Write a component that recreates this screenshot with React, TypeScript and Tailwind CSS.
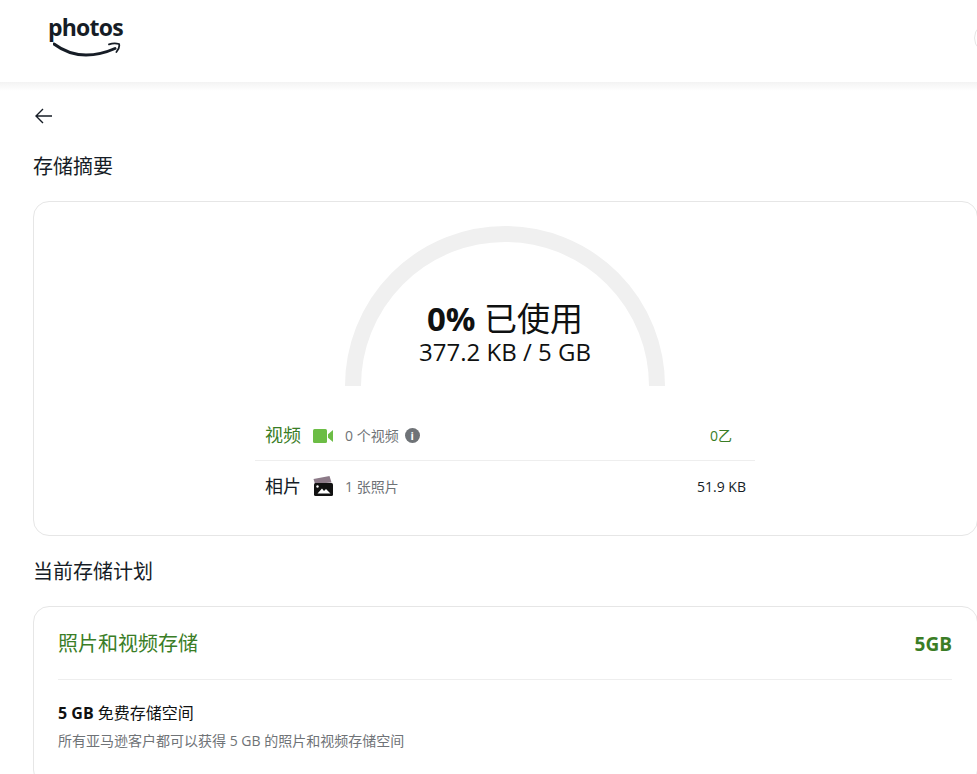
const sans = "font-['Open_Sans','Noto_Sans_CJK_SC',sans-serif]";

function Logo() {
  return (
    <div className="ml-[48px] flex w-[76px] flex-col">
      <span className="mt-[13px] text-[23px] font-bold leading-[28px] tracking-[-0.8px] text-[#161d26]">photos</span>
      <svg width="68" height="17" viewBox="0 0 68 17" className="ml-[5px] mt-[1px]" fill="none">
        <path d="M1 2C11 9.5 22 13 33 13C44 13 53 10.5 62 6.5" stroke="#161d26" strokeWidth="3" strokeLinecap="round" />
        <path d="M56 2.4C59 1.4 63 1.2 66 2C66.6 4 65.6 7.6 63.4 10" stroke="#161d26" strokeWidth="1.8" strokeLinecap="round" />
      </svg>
    </div>
  );
}

function VideoIcon() {
  return (
    <svg width="20" height="14" viewBox="0 0 20 14" className="shrink-0">
      <rect x="0" y="0" width="14" height="14" rx="1.5" fill="#6cbd45" />
      <path d="M15 5.2L20 1V13L15 8.8Z" fill="#6cbd45" />
    </svg>
  );
}

function PhotoIcon() {
  return (
    <svg width="20" height="20" viewBox="0 0 20 20" className="shrink-0">
      <path d="M0.5 3L16.5 0L18.5 6.5L2 8Z" fill="#8c7a88" />
      <rect x="1" y="7" width="19" height="13" rx="1.5" fill="#111" />
      <circle cx="4.5" cy="10.5" r="1.2" fill="#fff" />
      <path d="M4.5 17.5L9 12.5L11 15L13 13L17.5 17.5Z" fill="#fff" />
    </svg>
  );
}

function InfoIcon() {
  return (
    <span className="ml-[6px] flex size-[15px] items-center justify-center rounded-full bg-[#6f7377] text-[11px] font-bold leading-none text-white">
      i
    </span>
  );
}

function Row({ label, icon, count, value, labelClass, valueClass, info }: {
  label: string;
  icon: React.ReactNode;
  count: string;
  value: string;
  labelClass: string;
  valueClass: string;
  info?: boolean;
}) {
  return (
    <div className="flex h-[50px] items-center pl-[10px] pr-[10px]">
      <span className={`w-[48px] text-[18px] ${labelClass}`}>{label}</span>
      <span className="flex w-[32px] justify-start">{icon}</span>
      <span className="flex flex-1 items-center text-[14px] text-[#6f7377]">
        {count}
        {info && <InfoIcon />}
      </span>
      <span className={`w-[48px] whitespace-nowrap text-center text-[14px] ${valueClass}`}>{value}</span>
    </div>
  );
}

export default function App() {
  return (
    <div className={`h-[774px] w-[977px] overflow-hidden bg-white ${sans}`}>
      <header className="relative h-[82px] bg-white">
        <Logo />
        <span className="absolute left-[974px] top-[22px] size-[32px] rounded-full border border-[#e6e6e6]" />
      </header>
      <div className="h-[9px] bg-gradient-to-b from-[#f3f3f3] to-white" />
      <main className="pl-[33px]">
        <svg width="20" height="20" viewBox="0 0 20 20" className="mt-[15px] ml-[1px]" fill="none" stroke="#161d26" strokeWidth="1.4">
          <path d="M18 10H2M9 3L2 10L9 17" />
        </svg>
        <h1 className="mt-[26px] h-[29px] text-[20px] font-normal leading-[30px] text-[#161d26]">存储摘要</h1>

        <section className="mt-[20px] h-[335px] w-[945px] rounded-[16px] border border-[#e6e6e6] pr-[1px] pt-[24px]">
          <div className="relative mx-auto h-[160px] w-[320px]">
            <svg width="320" height="160" viewBox="0 0 320 160" fill="none">
              <path d="M8 160A152 152 0 0 1 312 160" stroke="#f0f0f0" strokeWidth="16" />
            </svg>
            <div className="absolute inset-x-0 top-[75px] whitespace-nowrap text-center text-[#0f1111]">
              <p className="h-[36px] text-[33px] leading-[36px]"><b className="font-bold">0%</b> 已使用</p>
              <p className="h-[30px] text-[24px] leading-[30px]">377.2 KB / 5 GB</p>
            </div>
          </div>
          <div className="mx-auto mt-[25px] w-[500px] divide-y divide-[#eeeeee]">
            <Row label="视频" icon={<VideoIcon />} count="0 个视频" value="0乙" labelClass="text-[#3a7d26]" valueClass="text-[#3a7d26]" info />
            <Row label="相片" icon={<PhotoIcon />} count="1 张照片" value="51.9 KB" labelClass="text-[#161d26]" valueClass="text-[#161d26]" />
          </div>
        </section>

        <h2 className="mt-[21px] h-[29px] text-[20px] font-normal leading-[30px] text-[#161d26]">当前存储计划</h2>

        <section className="mt-[20px] h-[180px] w-[945px] rounded-[16px] border border-[#e6e6e6] pl-[24px] pr-[25px]">
          <div className="flex h-[73px] items-center justify-between border-b border-[#eeeeee] pt-[2px]">
            <span className="text-[20px] text-[#3a7d26]">照片和视频存储</span>
            <span className="text-[19px] font-bold text-[#3a7d26]">5GB</span>
          </div>
          <p className="mt-[22px] text-[16px] leading-[22px] text-[#0f1111]"><b className="font-bold">5 GB</b> 免费存储空间</p>
          <p className="mt-[7px] text-[14px] leading-[20px] text-[#6f7377]">所有亚马逊客户都可以获得 5 GB 的照片和视频存储空间</p>
        </section>
      </main>
    </div>
  );
}
